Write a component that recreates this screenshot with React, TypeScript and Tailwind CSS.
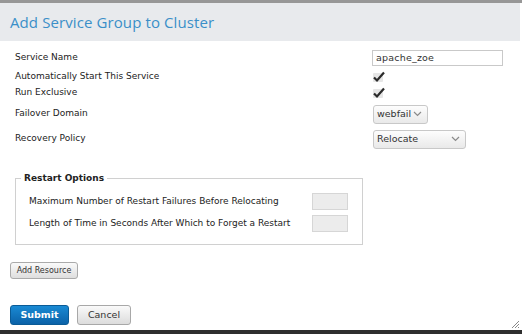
import React from "react";

function Check() {
  return (
    <svg width="14" height="12" viewBox="0 0 14 12">
      <rect x="1" y="2" width="10" height="9" rx="1" fill="#e6e6e6" />
      <path d="M2 6.5 L5 9.5 L12 1.5" fill="none" stroke="#2b2b2b" strokeWidth="2.2" />
    </svg>
  );
}

function Chevron() {
  return (
    <svg width="9" height="6" viewBox="0 0 9 6">
      <path d="M1 1 L4.5 4.5 L8 1" fill="none" stroke="#8a8a8a" strokeWidth="1.2" />
    </svg>
  );
}

function Select({ value, width }: { value: string; width: string }) {
  return (
    <div
      className={`${width} h-[19px] flex items-center justify-between pl-[3px] pr-[5px] rounded-[3px] border border-[#c8c8c8] bg-gradient-to-b from-[#fdfdfd] to-[#e9e9e9] text-[9.5px] text-[#333]`}
    >
      <span>{value}</span>
      <Chevron />
    </div>
  );
}

export default function App() {
  const font = { fontFamily: '"DejaVu Sans", sans-serif' };
  return (
    <div
      className="w-[522px] h-[334px] flex flex-col bg-white border-t-[3px] border-[#979797] overflow-hidden text-[#222]"
      style={font}
    >
      <div className="h-[38px] shrink-0 bg-[#e8eaed] flex items-center pl-[10px] mr-[2px]">
        <h1
          className="text-[15px] text-[#3a8fc8] tracking-[0.1px]"
          style={{ fontFamily: '"Open Sans", sans-serif' }}
        >
          Add Service Group to Cluster
        </h1>
      </div>

      <div className="flex-1 flex flex-col pl-[15px] pt-[8px] text-[9px]">
        <div className="flex items-center h-[18px]">
          <span className="w-[357px]">Service Name</span>
          <div className="w-[131px] h-[16px] border border-[#c9c9c9] flex items-center pl-[3px] text-[9.5px] tracking-[0.2px] text-[#333]">
            apache_zoe
          </div>
        </div>
        <div className="flex items-center h-[20px]">
          <span className="w-[357px]">Automatically Start This Service</span>
          <Check />
        </div>
        <div className="flex items-center h-[12px]">
          <span className="w-[357px]">Run Exclusive</span>
          <Check />
        </div>
        <div className="flex items-center h-[30px]">
          <span className="w-[358px]">Failover Domain</span>
          <Select value="webfail" width="w-[55px]" />
        </div>
        <div className="flex items-center h-[20px]">
          <span className="w-[358px]">Recovery Policy</span>
          <Select value="Relocate" width="w-[93px]" />
        </div>

        <fieldset className="mt-[23px] w-[348px] h-[73px] border border-[#d0d0d0] pl-[13px] pt-[6px]">
          <legend className="-ml-[8px] px-[3px] font-bold text-[9px]">Restart Options</legend>
          <div className="flex items-center h-[20px]">
            <span className="w-[283px]">Maximum Number of Restart Failures Before Relocating</span>
            <div className="w-[36px] h-[17px] bg-[#ececec] border border-[#d6d6d6]" />
          </div>
          <div className="flex items-center h-[20px] mt-[2px]">
            <span className="w-[283px]">Length of Time in Seconds After Which to Forget a Restart</span>
            <div className="w-[36px] h-[17px] bg-[#ececec] border border-[#d6d6d6]" />
          </div>
        </fieldset>

        <button className="mt-[17px] -ml-[5px] w-[68px] h-[17px] rounded-[3px] border border-[#aaa] bg-gradient-to-b from-[#fafafa] to-[#dedede] text-[8px] text-[#333] flex items-center justify-center">
          Add Resource
        </button>

        <div className="flex gap-[8px] mt-[26px] -ml-[5px]">
          <button className="w-[59px] h-[20px] rounded-[3px] border border-[#0a5b96] bg-gradient-to-b from-[#1a8ad4] to-[#0b62a8] text-white font-bold text-[9.5px]">
            Submit
          </button>
          <button className="w-[54px] h-[20px] rounded-[3px] border border-[#a8a8a8] bg-gradient-to-b from-[#fafafa] to-[#dcdcdc] text-[9.5px] text-[#333]">
            Cancel
          </button>
        </div>
      </div>

      <div className="relative h-[4px] shrink-0 bg-[#2e2e2e]">
        <svg className="absolute right-[2px] -top-[10px]" width="9" height="9" viewBox="0 0 9 9">
          <path d="M8 1 L1 8 M8 4 L4 8 M8 7 L7 8" stroke="#888" strokeWidth="1" />
        </svg>
      </div>
    </div>
  );
}
